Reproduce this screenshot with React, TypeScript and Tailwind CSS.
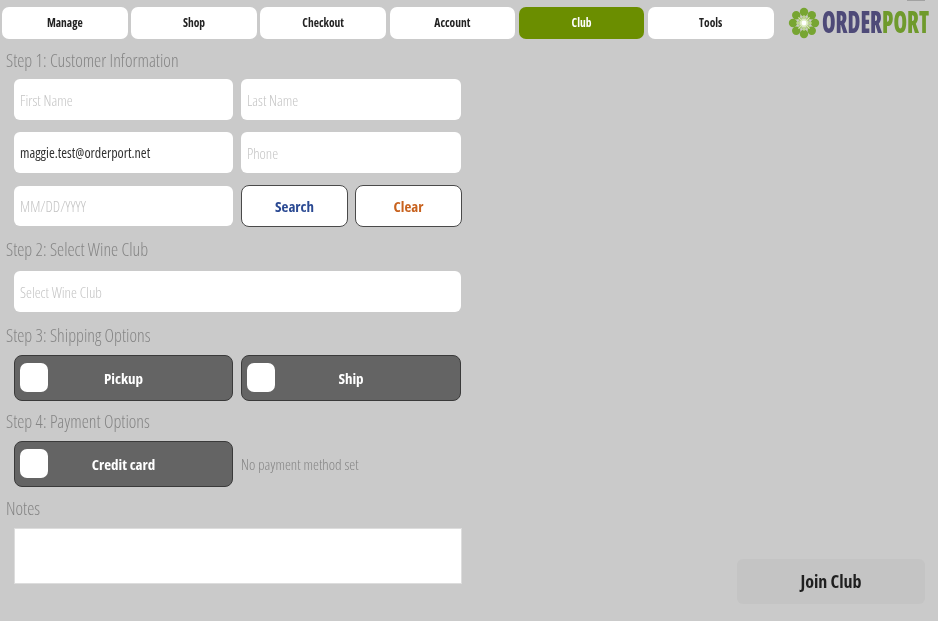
const FONT = "font-['Open_Sans','Noto_Sans',sans-serif] [font-stretch:75%]";

const NAV = ["Manage", "Shop", "Checkout", "Account", "Club", "Tools"];

function Logo() {
  const petals = [0, 45, 90, 135, 180, 225, 270, 315];
  return (
    <div className="flex items-center ml-[10.5px] w-[142px] h-[32px] shrink-0">
      <svg width="32" height="32" viewBox="0 0 32 32" className="shrink-0">
        {petals.map((a) => (
          <g key={a} transform={`rotate(${a} 16 16)`}>
            <circle cx="16" cy="5" r="4.2" fill="#77a532" />
            <circle cx="16" cy="10.5" r="1.8" fill="#a9c873" />
            <line x1="16" y1="16" x2="16" y2="8" stroke="#dcebbd" strokeWidth="0.8" />
          </g>
        ))}
        <circle cx="16" cy="16" r="4" fill="#dcebbd" />
        <circle cx="16" cy="16" r="2.4" fill="#ffffff" />
      </svg>
      <div className="ml-[2px] w-[108px] whitespace-nowrap">
        <span className={`inline-block origin-left scale-x-[0.73] text-[30px] leading-none font-extrabold ${FONT}`}>
          <span className="text-[#4e4a78]">ORDER</span>
          <span className="text-[#6f9a2c]">PORT</span>
        </span>
      </div>
    </div>
  );
}

function Label({ children }: { children: React.ReactNode }) {
  return (
    <div className={`h-[19px] pl-[6px] text-[18px] leading-[19px] font-light text-[#858585] ${FONT}`}>
      {children}
    </div>
  );
}

function Field({ text, value, className = "w-[219px]" }: { text?: string; value?: string; className?: string }) {
  return (
    <div
      className={`flex items-center h-[40.5px] pl-[6px] pt-[1px] rounded-[6px] bg-white ${FONT} ${className} ${
        value ? "text-[14px] text-[#333333]" : "text-[15px] font-light text-[#c4c4c4]"
      }`}
    >
      {value ?? text}
    </div>
  );
}

function Option({ text, className = "w-[219px]" }: { text: string; className?: string }) {
  return (
    <div className={`flex items-center h-[46px] pl-[5px] rounded-[8px] bg-[#646464] border border-[#3a3a3a] ${className}`}>
      <span className="w-[28px] h-[29px] rounded-[7px] bg-white shrink-0" />
      <span className={`flex-1 text-center pr-[33px] pt-[1px] text-[15px] font-bold text-white ${FONT}`}>{text}</span>
    </div>
  );
}

export default function App() {
  return (
    <div className="relative w-[938px] h-[621px] bg-[#cacaca] overflow-hidden">
      <div className="w-full h-full flex flex-col [filter:blur(0.4px)]">
        <div className="absolute top-0 right-[13px] w-[18px] h-[1px] bg-[#a2a2a2]" />

        {/* Top nav + logo */}
        <div className="flex items-center pt-[7px] pl-[2px] gap-[3.6px]">
          {NAV.map((n) => (
            <button
              key={n}
              className={`w-[125.6px] h-[32px] rounded-[7px] text-[11.5px] font-bold ${FONT} ${
                n === "Club" ? "bg-[#6b8e00] text-white" : "bg-white text-[#222222]"
              }`}
            >
              {n}
            </button>
          ))}
          <Logo />
        </div>

        <div className="flex-1 flex justify-between">
          {/* Form */}
          <div className="w-[470px] pt-[12px]">
            <Label>Step 1: Customer Information</Label>
            <div className="pl-[14px] pt-[9px] flex flex-col gap-[12.5px]">
              <div className="flex gap-[8px]">
                <Field text="First Name" />
                <Field text="Last Name" className="w-[220px]" />
              </div>
              <div className="flex gap-[8px]">
                <Field value="maggie.test@orderport.net" />
                <Field text="Phone" className="w-[220px]" />
              </div>
              <div className="flex items-center">
                <Field text="MM/DD/YYYY" />
                <button className={`ml-[8px] w-[107px] h-[42px] rounded-[8px] bg-white border-[1.5px] border-[#4a4a4a] text-[15px] font-bold text-[#2b4a93] ${FONT}`}>
                  Search
                </button>
                <button className={`ml-[7px] w-[107px] h-[42px] rounded-[8px] bg-white border-[1.5px] border-[#4a4a4a] text-[15px] font-bold text-[#c8621e] ${FONT}`}>
                  Clear
                </button>
              </div>
            </div>

            <div className="pt-[13px]">
              <Label>Step 2: Select Wine Club</Label>
            </div>
            <div className="pl-[14px] pt-[12px]">
              <Field text="Select Wine Club" className="w-[447px]" />
            </div>

            <div className="pt-[14px]">
              <Label>Step 3: Shipping Options</Label>
            </div>
            <div className="pl-[14px] pt-[10px] flex gap-[8px]">
              <Option text="Pickup" />
              <Option text="Ship" className="w-[220px]" />
            </div>

            <div className="pt-[11px]">
              <Label>Step 4: Payment Options</Label>
            </div>
            <div className="pl-[14px] pt-[10px] flex items-center gap-[8px]">
              <Option text="Credit card" />
              <span className={`pt-[2px] text-[15px] font-light text-[#858585] ${FONT}`}>No payment method set</span>
            </div>

            <div className="pt-[12px]">
              <Label>Notes</Label>
            </div>
            <div className="pl-[14px] pt-[10px]">
              <div className="w-[448px] h-[56px] bg-white border border-[#dddddd]" />
            </div>
          </div>

          {/* Join */}
          <div className="flex items-end pb-[17px] pr-[13px]">
            <button className={`w-[188px] h-[45px] rounded-[6px] bg-[#c4c4c4] text-[18px] font-bold text-[#1f1f1f] ${FONT}`}>
              Join Club
            </button>
          </div>
        </div>
      </div>
    </div>
  );
}
